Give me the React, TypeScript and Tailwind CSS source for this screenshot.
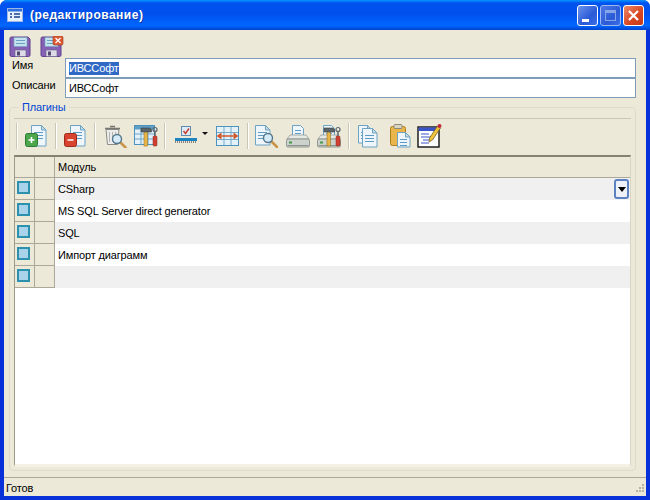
import * as React from "react"

const rows = ["CSharp", "MS SQL Server direct generator", "SQL", "Импорт диаграмм", ""]

// small page with text lines, the base of most of the toolbar icons
function Page({ x = 0, y = 0, w = 14, h = 18 }: { x?: number; y?: number; w?: number; h?: number }) {
  return (
    <g>
      <path
        d={`M${x + 0.5} ${y + 0.5}h${w - 5}l4.5 4.5v${h - 5}h${-w + 0.5}z`}
        fill="#eef6fb"
        stroke="#6fa3c4"
      />
      <path d={`M${x + w - 4.5} ${y + 0.5}v4.5h4.5z`} fill="#c3dcec" stroke="#6fa3c4" />
      <path
        d={`M${x + 3} ${y + 7.5}h${w - 6}M${x + 3} ${y + 10.5}h${w - 6}M${x + 3} ${y + 13.5}h${w - 6}`}
        stroke="#5d9cc6"
      />
    </g>
  )
}

function Lens({ x, y }: { x: number; y: number }) {
  return (
    <g>
      <path d={`M${x + 6} ${y + 6}l6 6`} stroke="#c8954a" strokeWidth="2.6" strokeLinecap="round" />
      <circle cx={x + 3} cy={y + 3} r="4.5" fill="#d5ecf8" stroke="#54768c" strokeWidth="1.4" />
    </g>
  )
}

function Hammer({ x, y }: { x: number; y: number }) {
  return (
    <g>
      <rect x={x + 3} y={y + 3} width="3.5" height="15" fill="#e8b548" stroke="#9a7526" strokeWidth="0.6" />
      <path d={`M${x} ${y}h9l1.5 1.5v2.5h-10.500z`} fill="#5b6468" stroke="#3a4245" strokeWidth="0.6" />
      <rect x={x + 12} y={y + 8} width="4" height="10" rx="1" fill="#cf3f32" stroke="#8c2a22" strokeWidth="0.5" />
      <path d={`M${x + 14} ${y + 8}v-5`} stroke="#58636a" strokeWidth="1.500" />
      <circle cx={x + 14} cy={y + 1.500} r="2" fill="none" stroke="#58636a" strokeWidth="1.200" />
    </g>
  )
}

function Printer({ tools }: { tools?: boolean }) {
  return (
    <svg width="24" height="24" viewBox="0 0 24 24" className="flex-none">
      <path d="M6.500 1.500h8l3 3v9h-11z" fill="#eef6fb" stroke="#6fa3c4" />
      <path d="M9 6.500h6M9 9.500h6" stroke="#5d9cc6" />
      <path d="M4 11h16l3 4h-22z" fill="#e6e9e4" stroke="#8b9490" strokeWidth="0.700" />
      <rect x="0.500" y="15" width="23" height="8" rx="1.500" fill="#cdd2cc" stroke="#7d8682" strokeWidth="0.800" />
      <rect x="3" y="17.500" width="3" height="2" fill="#3f9a4a" />
      <path d="M1.500 21.500h21" stroke="#8d9490" />
      {tools && <Hammer x={7} y={4} />}
    </svg>
  )
}

function Floppy({ del }: { del?: boolean }) {
  return (
    <svg width="24" height="22" viewBox="0 0 24 22" className="flex-none">
      <path d="M1 2.500a1.500 1.500 0 0 1 1.500-1.500h16.500l2 2v16a1.500 1.500 0 0 1-1.500 1.500h-17a1.500 1.500 0 0 1-1.500-1.500z" fill="#8560b6" stroke="#5f4089" />
      <rect x="5" y="1.500" width="13" height="9" fill="#c4e3ef" stroke="#6f9fbd" strokeWidth="0.600" />
      <path d="M7 4.500h9M7 7.500h9" stroke="#6d9fc0" />
      <rect x="6" y="14" width="11" height="6.500" fill="#dcdae6" stroke="#675d85" strokeWidth="0.600" />
      <rect x="8" y="15.500" width="3" height="4" fill="#55486f" />
      {del && (
        <g>
          <rect x="13" y="0" width="10" height="9" rx="1.500" fill="#dd5a35" stroke="#a33a1f" strokeWidth="0.600" />
          <path d="M15.500 2l5 5M20.500 2l-5 5" stroke="#fff" strokeWidth="1.200" />
        </g>
      )}
    </svg>
  )
}

function PageBadge({ color, edge, minus }: { color: string; edge: string; minus?: boolean }) {
  return (
    <svg width="24" height="24" viewBox="0 0 24 24" className="flex-none">
      <Page x={7} y={1} w={15} h={21} />
      <rect x="1.500" y="9.500" width="12" height="13" rx="2" fill={color} stroke={edge} />
      <path d={minus ? "M4.500 16h6" : "M4.500 16h6M7.500 13v6"} stroke="#fff" strokeWidth="1.600" />
    </svg>
  )
}

function Trash() {
  return (
    <svg width="24" height="24" viewBox="0 0 24 24" className="flex-none">
      <path d="M3 5.500h13l-1.500 15h-10z" fill="#ececec" stroke="#8d8d88" />
      <path d="M2 4.500h15M7 2.500h5" stroke="#77776f" strokeWidth="1.500" />
      <path d="M6.500 8v10M9.500 8v10M12.500 8v10" stroke="#b4b4ae" />
      <Lens x={11} y={12} />
    </svg>
  )
}

function TableTools() {
  return (
    <svg width="24" height="24" viewBox="0 0 24 24" className="flex-none">
      <rect x="0.500" y="1.500" width="20" height="19" fill="#e4f1f8" stroke="#4e93bd" />
      <rect x="1" y="2" width="19" height="3.500" fill="#5f9fc6" />
      <path d="M1 10h19M1 15h19M7 6v14M14 6v14" stroke="#6aa6cb" />
      <Hammer x={7} y={4} />
    </svg>
  )
}

function CheckLine() {
  return (
    <svg width="33" height="24" viewBox="0 0 33 24" className="flex-none">
      <rect x="6.500" y="2.500" width="9" height="9" fill="#dfeaf4" stroke="#5e8cb3" />
      <path d="M8.500 7l2 2.500 3.500-5" stroke="#c9402f" strokeWidth="1.500" fill="none" />
      <rect x="0" y="14" width="22" height="3" fill="#1c84c0" />
      <path d="M0 18h22" stroke="#222" strokeDasharray="1 1" />
      <path d="M27 8h6l-3 3z" fill="#111" />
    </svg>
  )
}

function TableArrows() {
  return (
    <svg width="24" height="24" viewBox="0 0 24 24" className="flex-none">
      <rect x="0.500" y="2.500" width="22" height="19" fill="#e4f1f8" stroke="#4e93bd" />
      <path d="M1 8.500h21M1 15.500h21M8 3v18M15 3v18" stroke="#74abcd" />
      <path d="M2 12h19M5.500 9.500l-3.500 2.500 3.500 2.500M17.500 9.500l3.500 2.500-3.500 2.500" stroke="#d0572c" strokeWidth="1.600" fill="none" />
    </svg>
  )
}

function PagesCopy() {
  return (
    <svg width="24" height="24" viewBox="0 0 24 24" className="flex-none">
      <Page x={2} y={1} w={14} h={18} />
      <Page x={6} y={4} w={15} h={19} />
    </svg>
  )
}

function Clipboard() {
  return (
    <svg width="24" height="24" viewBox="0 0 24 24" className="flex-none">
      <rect x="2.500" y="2.500" width="15" height="19" rx="2" fill="#eab54a" stroke="#ae7e22" />
      <rect x="6" y="0.500" width="8" height="4" rx="1" fill="#d9d6c4" stroke="#8b8a78" />
      <Page x={9} y={8} w={13} h={15} />
    </svg>
  )
}

function Notepad() {
  return (
    <svg width="26" height="26" viewBox="0 0 26 26" className="flex-none">
      <rect x="1" y="4" width="21" height="20" fill="#fff" stroke="#111" strokeWidth="1.400" />
      <rect x="1.500" y="4.500" width="20" height="3.500" fill="#3a55c8" />
      <path d="M4 11h8M4 14h10M6 17h6M4 20h8" stroke="#3a55c8" />
      <path d="M20.500 3l3 2-8 12-3.500 2 .5-4z" fill="#eec23a" stroke="#6d5614" strokeWidth="0.700" />
      <circle cx="22.500" cy="3" r="2" fill="#c32a3c" />
    </svg>
  )
}

function Sep({ className }: { className?: string }) {
  return <div className={`flex-none w-[2px] h-[26px] border-l border-r border-l-[#c9c6b4] border-r-white ${className}`} />
}

export default function App() {
  return (
    <div
      className="w-[650px] h-[500px] flex flex-col bg-[#0831d9] text-[11px] tracking-[-0.15px] text-black rounded-t-[7px] overflow-hidden"
      style={{ fontFamily: '"Liberation Sans", Arial, sans-serif' }}
    >
      <div className="h-[30px] shrink-0 flex items-center pl-[7px] pr-[6px] bg-[linear-gradient(180deg,#0997ff_0%,#0053ee_10%,#0050ee_45%,#0066ff_85%,#0043cf_100%)]">
        <svg width="16" height="14" viewBox="0 0 16 14" className="shrink-0">
          <rect x="0.500" y="0.500" width="15" height="13" fill="#e8f0fb" stroke="#9bb7e3" />
          <rect x="1" y="1" width="14" height="2.500" fill="#2f6fdc" />
          <path d="M3 6h2M7 6h6M3 9h2M7 9h6" stroke="#1d3f8f" strokeWidth="1.500" />
        </svg>
        <span className="ml-[7px] text-[12px] font-bold text-white tracking-[0.5px] [text-shadow:1px_1px_0_#0a3fb0]">
          (редактирование)
        </span>
        <div className="ml-auto flex gap-[2px]">
          <button className="w-[21px] h-[21px] rounded-[3px] border border-white bg-[linear-gradient(135deg,#6a93ee,#2a5ad6_60%,#3d6fe6)] flex items-end pl-[4px] pb-[3px]">
            <span className="block w-[7px] h-[3px] bg-white" />
          </button>
          <button className="w-[21px] h-[21px] rounded-[3px] border border-[#9db8ee] bg-[linear-gradient(135deg,#5079e6,#2a5ad6_60%,#3d6fe6)] flex items-center justify-center">
            <span className="block w-[11px] h-[11px] border border-[#87a6ea] border-t-[3px]" />
          </button>
          <button className="w-[21px] h-[21px] rounded-[3px] border border-white bg-[linear-gradient(135deg,#ec8a6c,#d8451f_60%,#c5391a)] flex items-center justify-center">
            <svg width="13" height="13" viewBox="0 0 13 13">
              <path d="M2 2l9 9M11 2l-9 9" stroke="#fff" strokeWidth="2.200" />
            </svg>
          </button>
        </div>
      </div>

      <div className="flex-1 min-h-0 mx-[4px] mb-[4px] flex flex-col bg-[#ece9d8]">
        <div className="h-[28px] shrink-0 flex items-end gap-[7px] pl-[5px]">
          <Floppy />
          <Floppy del />
        </div>

        <div className="flex pl-[8px] pr-[10px] h-[20px]">
          <span className="w-[53px] leading-[14px]">Имя</span>
          <div className="flex-1 h-[20px] bg-white border border-[#7f9db9] pl-[3px] flex items-center">
            <span className="bg-[#316ac5] text-white leading-[13px]">ИВССофт</span>
          </div>
        </div>
        <div className="flex pl-[8px] pr-[10px] h-[20px]">
          <span className="w-[53px] leading-[14px] overflow-hidden">Описани</span>
          <div className="flex-1 h-[20px] bg-white border border-[#7f9db9] pl-[3px] flex items-center">ИВССофт</div>
        </div>

        <fieldset className="flex-1 min-h-0 mt-[3px] ml-[5px] mr-[10px] mb-[6px] px-[4px] pb-[3px] border border-[#dedbca] rounded-[4px] flex flex-col">
          <legend className="ml-[5px] px-[3px] text-[#0046d5] leading-[13px]">Плагины</legend>
          <div className="h-[37px] shrink-0 mt-[4px] pb-[2px] flex items-center border-t border-[#c9c6b4]">
            <Sep className="ml-[2px]" />
            <div className="ml-[6px] flex-none"><PageBadge color="#4ca64c" edge="#2c7a34" /></div>
            <Sep className="ml-[7px]" />
            <div className="ml-[6px] flex-none"><PageBadge color="#d8432f" edge="#9b2a1d" minus /></div>
            <Sep className="ml-[7px]" />
            <div className="ml-[7px] flex-none"><Trash /></div>
            <div className="ml-[7px] flex-none"><TableTools /></div>
            <Sep className="ml-[6px]" />
            <div className="ml-[9px] flex-none"><CheckLine /></div>
            <div className="ml-[8px] flex-none"><TableArrows /></div>
            <Sep className="ml-[7px]" />
            <svg width="24" height="24" viewBox="0 0 24 24" className="ml-[5px] flex-none">
              <Page x={1} y={1} w={15} h={20} />
              <Lens x={11} y={11} />
            </svg>
            <div className="ml-[8px] flex-none"><Printer /></div>
            <div className="ml-[7px] flex-none"><Printer tools /></div>
            <Sep className="ml-[7px]" />
            <div className="ml-[6px] flex-none"><PagesCopy /></div>
            <div className="ml-[8px] flex-none"><Clipboard /></div>
            <div className="ml-[5px] flex-none"><Notepad /></div>
          </div>

          <div className="flex-1 min-h-0 border-t-2 border-l border-[#85836f] border-l-[#9c9a87] border-r border-b-3 border-r-[#d8d5c4] border-b-[#f4f2e6] bg-white flex flex-col">
            <div className="h-[21px] shrink-0 flex bg-[#ece9d8] border-b border-[#aca899]">
              <div className="w-[20px] border-r border-[#aca899]" />
              <div className="w-[20px] border-r border-[#aca899]" />
              <div className="flex-1 pl-[3px] flex items-center">Модуль</div>
            </div>
            {rows.map((name, i) => (
              <div key={i} className={`h-[22px] shrink-0 flex ${i % 2 === 0 ? "bg-[#f0f0f0]" : "bg-white"}`}>
                <div className="w-[20px] shrink-0 flex items-center justify-center border-r border-b border-[#aca899] bg-[#ece9d8]">
                  <div className="w-[13px] h-[13px] -ml-[2px] -mt-[2px] border-2 border-[#2b91af] bg-[#a9d3ea]" />
                </div>
                <div className="w-[20px] shrink-0 bg-[#ece9d8] border-r border-b border-[#aca899]" />
                <div className="flex-1 pl-[3px] flex items-center relative">
                  {name}
                  {i === 0 && (
                    <div className="absolute right-[1px] top-[1px] w-[15px] h-[20px] rounded-[3px] border-2 border-[#5d82c2] bg-[#eef1f8] flex items-center justify-center">
                      <span className="block border-x-[4px] border-x-transparent border-t-[5px] border-t-black" />
                    </div>
                  )}
                </div>
              </div>
            ))}
          </div>
        </fieldset>

        <div className="h-[19px] shrink-0 flex items-center pl-[2px] pt-[3px] border-t border-[#aca899] relative">
          Готов
          <svg width="12" height="12" viewBox="0 0 12 12" className="absolute right-[1px] bottom-[1px]">
            <path d="M9 1h2v2h-2zM6 4h2v2h-2zM9 4h2v2h-2zM3 7h2v2h-2zM6 7h2v2h-2zM9 7h2v2h-2z" fill="#b5b29f" />
          </svg>
        </div>
      </div>
    </div>
  )
}
